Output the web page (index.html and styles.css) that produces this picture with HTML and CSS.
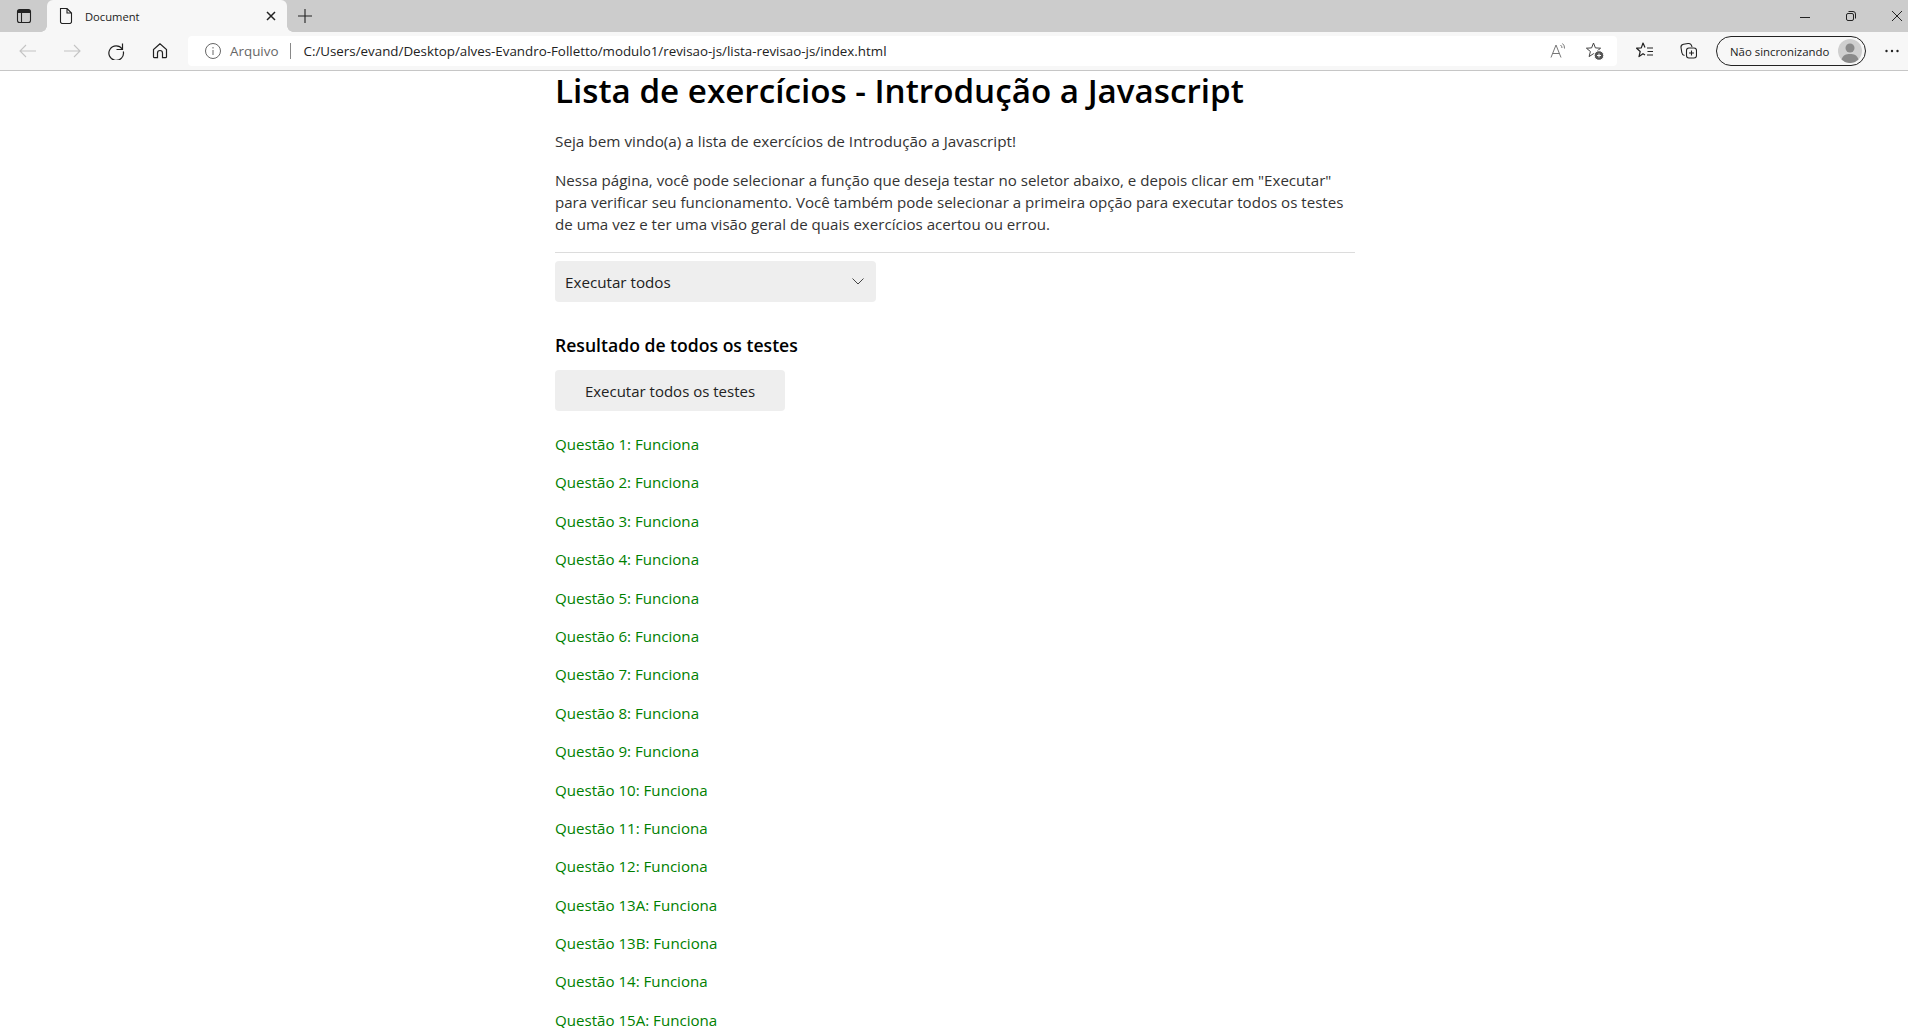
FILE: index.html
```html
<!DOCTYPE html>
<html lang="pt-BR">
  <head>
    <meta charset="UTF-8" />
    <title>Document</title>
    <link rel="stylesheet" href="styles.css">
  </head>
  <body>
    <header class="browser">
      <div class="tabstrip">
        <button class="strip-btn tabs-btn">
          <svg width="16" height="16" viewBox="0 0 16 16" fill="none" stroke="#222" stroke-width="1.1"><rect x="1.5" y="1.5" width="13" height="13" rx="2"/><path d="M5.5 5v9.500"/><path d="M2 2h12v3H2z" fill="#222" stroke="none"/></svg>
        </button>
        <div class="tab">
          <svg width="16" height="16" viewBox="0 0 16 16" fill="none" stroke="#222" stroke-width="1.1"><path d="M2.500 .500h6.500l4.500 4.500v8.700a1.800 1.800 0 0 1-1.800 1.800H4.300a1.800 1.800 0 0 1-1.800-1.800zM9 .500V5h4.500"/></svg>
          <span class="tab-title">Document</span>
          <svg class="tab-close" width="10" height="10" viewBox="0 0 10 10" stroke="#222" stroke-width="1.5"><path d="M1 1l8 8M9 1L1 9"/></svg>
        </div>
        <button class="strip-btn new-tab">
          <svg width="14" height="14" viewBox="0 0 14 14" stroke="#222" stroke-width="1.1"><path d="M7 0v14M0 7h14"/></svg>
        </button>
        <div class="window-btns">
          <svg width="10" height="10" viewBox="0 0 10 10" stroke="#222" stroke-width="1"><path d="M0 6.500h10"/></svg>
          <svg width="10" height="10" viewBox="0 0 10 10" fill="none" stroke="#222" stroke-width="1"><rect x=".5" y="2.500" width="7" height="7" rx="1.500"/><path d="M2.500 .5h4.500a2.500 2.500 0 0 1 2.500 2.500v4.500"/></svg>
          <svg width="10" height="10" viewBox="0 0 10 10" stroke="#222" stroke-width="1"><path d="M0 0l10 10M10 0L0 10"/></svg>
        </div>
      </div>
      <div class="toolbar">
        <svg class="nav-icon" width="18" height="18" viewBox="0 0 18 18" fill="none" stroke="#c4c4c4" stroke-width="1.100"><path d="M17 9H1M7 3L1 9l6 6"/></svg>
        <svg class="nav-icon" width="18" height="18" viewBox="0 0 18 18" fill="none" stroke="#c4c4c4" stroke-width="1.100"><path d="M1 9h16M11 3l6 6-6 6"/></svg>
        <svg class="nav-icon" width="18" height="18" viewBox="0 0 18 18" fill="none" stroke="#222" stroke-width="1.200"><path d="M15.500 1.500v6h-6M15.200 7A7.300 7.300 0 1 0 16.300 9.500"/></svg>
        <svg class="nav-icon" width="18" height="18" viewBox="0 0 18 18" fill="none" stroke="#222" stroke-width="1.200"><path d="M9 1.800L2.500 7.500v7.200a1 1 0 0 0 1 1h3v-4.700a2.500 2.500 0 0 1 5 0v4.700h3a1 1 0 0 0 1-1V7.500z"/></svg>
        <div class="address">
          <svg width="16" height="16" viewBox="0 0 16 16" fill="none" stroke="#666" stroke-width="1"><circle cx="8" cy="8" r="7.500"/><path d="M8 7v5M8 4v1.500"/></svg>
          <span class="addr-file">Arquivo</span>
          <span class="addr-sep"></span>
          <span class="addr-url">C:/Users/evand/Desktop/alves-Evandro-Folletto/modulo1/revisao-js/lista-revisao-js/index.html</span>
          <svg class="addr-read" width="18" height="18" viewBox="0 0 18 18" fill="none" stroke="#777" stroke-width="1"><path d="M3 15.500L8 3l5 12.500M4.600 11.500h6.800M12.500 3a4 4 0 0 1 1.500 3M14.500 1.500a6 6 0 0 1 2 5"/></svg>
          <svg class="addr-fav" width="18" height="18" viewBox="0 0 18 18" fill="none" stroke="#444" stroke-width="1" stroke-linejoin="round"><path d="M7.500 1L9.400 5.900 14.600 6.200 10.600 9.500 11.900 14.600 7.500 11.700 3.100 14.600 4.400 9.500 .4 6.200 5.600 5.900z"/><circle cx="13" cy="13.500" r="4.800" fill="#555" stroke="#fff"/><path d="M13 11.500v4M11 13.500h4" stroke="#fff"/></svg>
        </div>
        <svg class="tool-icon fav-list" width="18" height="18" viewBox="0 0 18 18" fill="none" stroke="#222" stroke-width="1.200" stroke-linejoin="round"><path d="M9 5.500L7 1 5.300 5.900 .6 6.200 4.200 9.500 3 14.600 7 11.700 9 13M11 6h6M11.500 9.500H17M11 13h6"/></svg>
        <svg class="tool-icon collections" width="18" height="18" viewBox="0 0 18 18" fill="none" stroke="#222" stroke-width="1.100"><rect x="7.500" y="6" width="10" height="10" rx="2.500"/><path d="M12.500 8.500v5M10 11h5M5.500 13.500C3.500 13 3 12 2.800 10.500L2 5.500C1.700 3.500 3 2.500 4.500 2.200L9 1.500C11 1.200 12.500 2.500 13 5"/></svg>
        <div class="profile">
          <span class="profile-text">Não sincronizando</span>
          <span class="avatar">
            <svg width="24" height="24" viewBox="0 0 24 24"><circle cx="12" cy="12" r="12" fill="#cfcfcf"/><circle cx="12" cy="9" r="4.500" fill="#8a8a8a"/><path d="M3.500 20.500C5 16 8 15 12 15s7 1 8.500 5.500A12 12 0 0 1 3.500 20.500z" fill="#8a8a8a"/></svg>
          </span>
        </div>
        <svg class="menu-icon" width="16" height="16" viewBox="0 0 16 16" fill="#222"><circle cx="2.500" cy="8" r="1.200"/><circle cx="8" cy="8" r="1.200"/><circle cx="13.500" cy="8" r="1.200"/></svg>
      </div>
    </header>

    <main class="content">
      <h1>Lista de exercícios - Introdução a Javascript</h1>
      <p class="intro intro-first">Seja bem vindo(a) a lista de exercícios de Introdução a Javascript!</p>
      <p class="intro">
        Nessa página, você pode selecionar a função que deseja testar no seletor abaixo, e depois clicar em "Executar"
        para verificar seu funcionamento. Você também pode selecionar a primeira opção para executar todos os testes
        de uma vez e ter uma visão geral de quais exercícios acertou ou errou.
      </p>
      <hr />
      <div class="select">
        <span class="select-text">Executar todos</span>
        <svg width="12" height="7" viewBox="0 0 12 7" fill="none" stroke="#444" stroke-width="1"><path d="M.5 .5L6 6l5.500-5.500"/></svg>
      </div>
      <h2>Resultado de todos os testes</h2>
      <button class="run-btn">Executar todos os testes</button>
      <ul class="results">
        <li>Questão 1: Funciona</li>
        <li>Questão 2: Funciona</li>
        <li>Questão 3: Funciona</li>
        <li>Questão 4: Funciona</li>
        <li>Questão 5: Funciona</li>
        <li>Questão 6: Funciona</li>
        <li>Questão 7: Funciona</li>
        <li>Questão 8: Funciona</li>
        <li>Questão 9: Funciona</li>
        <li>Questão 10: Funciona</li>
        <li>Questão 11: Funciona</li>
        <li>Questão 12: Funciona</li>
        <li>Questão 13A: Funciona</li>
        <li>Questão 13B: Funciona</li>
        <li>Questão 14: Funciona</li>
        <li>Questão 15A: Funciona</li>
      </ul>
    </main>
  </body>
</html>
```

FILE: styles.css
```css
html,
body {
  height: 100%;
}

body {
  margin: 0;
  overflow: hidden;
  background-color: #fff;
  font-family: "Open Sans", "Noto Sans", sans-serif;
}

/* browser chrome */
.browser {
  width: 1908px;
  border-bottom: 1px solid #c6c6c6;
}

.tabstrip {
  display: flex;
  align-items: flex-end;
  height: 32px;
  background-color: #cccccc;
}

.strip-btn {
  display: flex;
  align-items: center;
  justify-content: center;
  border: none;
  padding: 0;
  background: none;
  height: 32px;
}

.tabs-btn {
  width: 47px;
}

.new-tab {
  width: 36px;
}

.tab {
  position: relative;
  display: flex;
  align-items: center;
  width: 240px;
  height: 32px;
  box-sizing: border-box;
  padding: 0 11px;
  background-color: #f7f7f7;
  border-radius: 6px 6px 0 0;
}

/* little flares where the tab meets the toolbar */
.tab::before,
.tab::after {
  content: "";
  position: absolute;
  bottom: 0;
  width: 6px;
  height: 6px;
}

.tab::before {
  left: -6px;
  background: radial-gradient(circle at 0 0, #cccccc 5.5px, #f7f7f7 6px);
}

.tab::after {
  right: -6px;
  background: radial-gradient(circle at 100% 0, #cccccc 5.5px, #f7f7f7 6px);
}

.tab-title {
  flex: 1;
  margin-left: 11px;
  font-size: 11.2px;
  color: #222;
}

.window-btns {
  display: flex;
  align-items: center;
  gap: 36px;
  height: 32px;
  margin-left: auto;
  padding-right: 6px;
}

.toolbar {
  display: flex;
  align-items: center;
  height: 38px;
  padding-left: 19px;
  background-color: #f7f7f7;
}

.nav-icon {
  margin-right: 26px;
}

.address {
  display: flex;
  align-items: center;
  width: 1429px;
  height: 30px;
  box-sizing: border-box;
  margin-left: -7px;
  padding: 0 13px 0 17px;
  background-color: #fff;
  border-radius: 4px;
  font-size: 13.4px;
}

.addr-file {
  margin-left: 9px;
  color: #666;
}

.addr-sep {
  width: 1px;
  height: 16px;
  margin: 0 12px;
  background-color: #888;
}

.addr-url {
  flex: 1;
  font-size: 13.35px;
  color: #222;
}

.addr-fav {
  margin-left: 20px;
}

.fav-list {
  margin-left: 19px;
}

.collections {
  margin-left: 25px;
}

.profile {
  display: flex;
  align-items: center;
  justify-content: space-between;
  width: 150px;
  height: 30px;
  box-sizing: border-box;
  margin-left: 19px;
  padding: 0 3px 0 13px;
  border: 1px solid #222;
  border-radius: 15px;
  font-size: 11.4px;
  color: #222;
}

.avatar {
  display: flex;
}

.menu-icon {
  margin-left: 18px;
}

/* page */
.content {
  width: 800px;
  margin-left: 555px;
}

h1 {
  margin: 0;
  font-size: 33.2px;
  font-weight: 600;
  line-height: 40px;
  color: #000;
}

.intro {
  margin: 17px 0 0;
  font-size: 15.1px;
  line-height: 22px;
  color: #333;
}

.intro-first {
  margin-top: 19px;
  font-size: 15.3px;
}

hr {
  height: 1px;
  margin: 17px 0 8px;
  border: none;
  background-color: #dcdcdc;
}

.select {
  display: flex;
  align-items: center;
  justify-content: space-between;
  width: 321px;
  height: 41px;
  box-sizing: border-box;
  padding: 0 12px 0 10px;
  background-color: #eeeeee;
  border-radius: 4px;
  font-size: 15.2px;
  color: #222;
}

.select-text {
  padding-top: 1px;
}

h2 {
  margin: 31px 0 13px;
  font-size: 17.6px;
  font-weight: 600;
  line-height: 24px;
  color: #000;
}

.run-btn {
  display: block;
  width: 230px;
  height: 41px;
  border: none;
  background-color: #eeeeee;
  border-radius: 4px;
  font-family: inherit;
  font-size: 15px;
  color: #222;
}

.results {
  margin: 0;
  padding: 22px 0 0;
  list-style: none;
  font-size: 15.1px;
  line-height: 22px;
  color: #008000;
}

.results li {
  margin-bottom: 16.4px;
}
```
